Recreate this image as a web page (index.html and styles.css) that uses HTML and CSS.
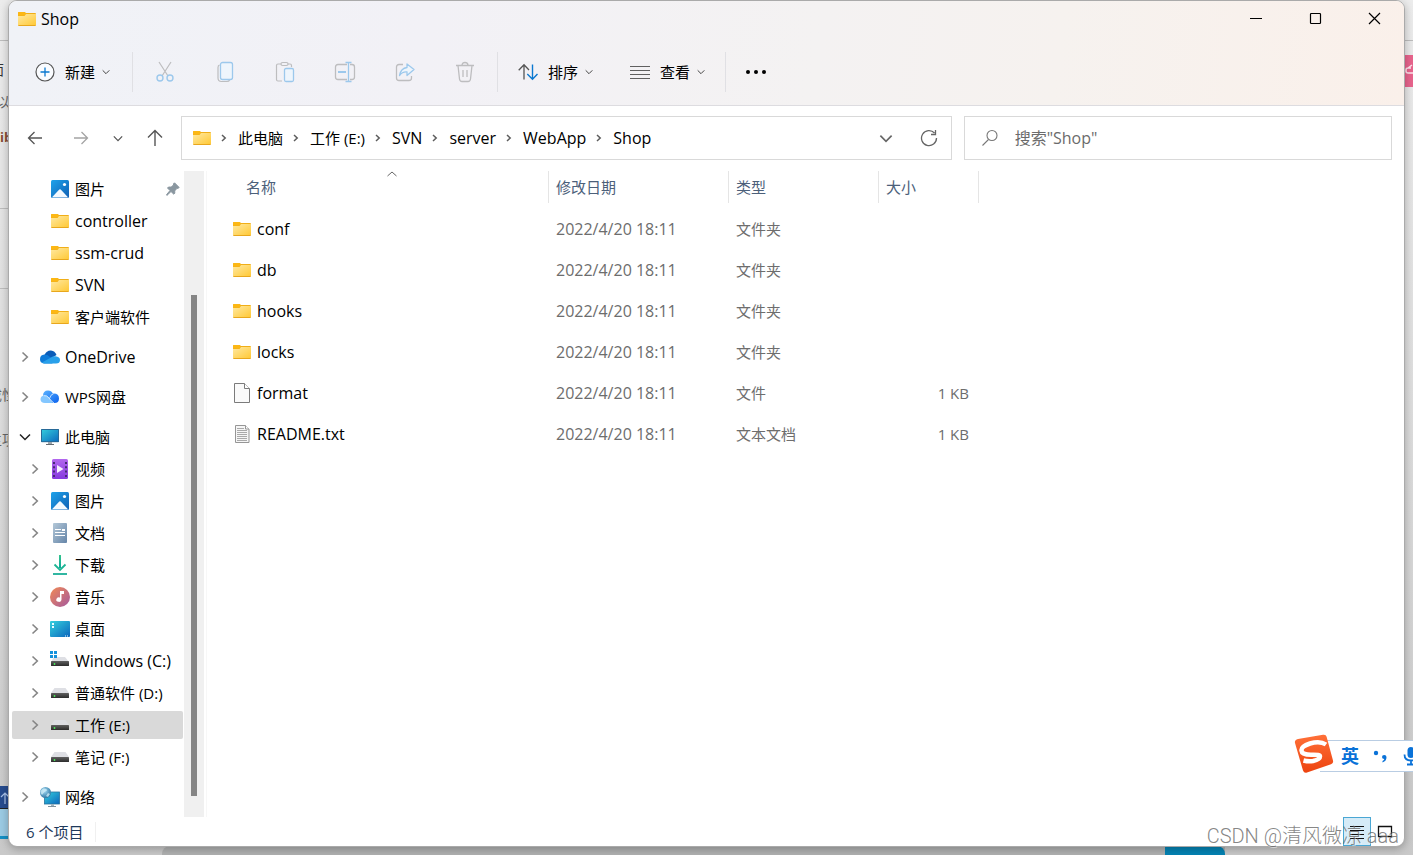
FILE: index.html
```html
<!DOCTYPE html>
<html lang="zh-CN">
<head>
<meta charset="utf-8">
<title>Shop</title>
<link rel="stylesheet" href="styles.css">
</head>
<body>
<svg class="sprite" aria-hidden="true">
  <defs>
    <linearGradient id="gFolder" x1="0" y1="0" x2="1" y2="1"><stop offset="0" stop-color="#ffe9a2"/><stop offset="1" stop-color="#ffc937"/></linearGradient>
    <linearGradient id="gPic" x1="0" y1="0" x2="1" y2="1"><stop offset="0" stop-color="#1fa3ea"/><stop offset="1" stop-color="#0f5fb4"/></linearGradient>
    <linearGradient id="gScreen" x1="0" y1="0" x2="1" y2="1"><stop offset="0" stop-color="#35d0dd"/><stop offset="1" stop-color="#0b66bd"/></linearGradient>
    <linearGradient id="gVideo" x1="0" y1="0" x2="0" y2="1"><stop offset="0" stop-color="#b267ee"/><stop offset="1" stop-color="#8639de"/></linearGradient>
    <linearGradient id="gDoc" x1="0" y1="0" x2="1" y2="1"><stop offset="0" stop-color="#b4c8d8"/><stop offset="1" stop-color="#6585a8"/></linearGradient>
    <linearGradient id="gDown" x1="0" y1="0" x2="0" y2="1"><stop offset="0" stop-color="#35c48d"/><stop offset="1" stop-color="#0ba79b"/></linearGradient>
    <linearGradient id="gMusic" x1="0" y1="0" x2="1" y2="1"><stop offset="0" stop-color="#f28a54"/><stop offset="1" stop-color="#a4599f"/></linearGradient>
    <linearGradient id="gDrive" x1="0" y1="0" x2="0" y2="1"><stop offset="0" stop-color="#606060"/><stop offset="1" stop-color="#2c2c2c"/></linearGradient>
    <linearGradient id="gWps" x1="0" y1="0" x2="1" y2="1"><stop offset="0" stop-color="#5ab2ff"/><stop offset="1" stop-color="#0b62ee"/></linearGradient>
    <radialGradient id="gGlobe" cx=".4" cy=".35" r=".7"><stop offset="0" stop-color="#a5dcf4"/><stop offset="1" stop-color="#28719f"/></radialGradient>
    <linearGradient id="gSogou" x1="0" y1="0" x2="0" y2="1"><stop offset="0" stop-color="#ff7038"/><stop offset="1" stop-color="#ed430f"/></linearGradient>
  </defs>
  <symbol id="folder" viewBox="0 0 18 14"><path d="M0 1Q0 0 1 0h5.500l1.500 1H17q1 0 1 1v5H0z" fill="#f0ae18"/><path d="M0 1Q0 0 1 0h5.500l1 1v1.500L6 3.500H0z" fill="#fcb714"/><path d="M0 4h6.500L8 2h10v11H0z" fill="url(#gFolder)"/><path d="M0 13h18q0 1-1 1H1q-1 0-1-1z" fill="#e8a71d"/></symbol>
  <symbol id="picture" viewBox="0 0 18 18"><rect width="18" height="18" rx="1.500" fill="url(#gPic)"/><path d="M1 17.300 8.300 9.600q.7-.7 1.400 0L17 17.300q-.4.3-1 .3H2q-.6 0-1-.3z" fill="#f3f9ff"/><circle cx="13.500" cy="4.500" r="1.600" fill="#fff"/></symbol>
  <symbol id="chev" viewBox="0 0 8 12"><path d="M1.500 1.500 6.300 6l-4.800 4.500" fill="none" stroke="currentColor" stroke-width="1.600"/></symbol>
  <symbol id="crumb" viewBox="0 0 6 8"><path d="m1 1 3.200 3L1 7" fill="none" stroke="#5c5c5c" stroke-width="1.500"/></symbol>
  <symbol id="down" viewBox="0 0 12 8"><path d="m1 1.500 5 5 5-5" fill="none" stroke="currentColor" stroke-width="1.500"/></symbol>
  <symbol id="drive" viewBox="0 0 18 12"><path d="M3.500 1h11L18 6H0z" fill="#dedfe4"/><rect y="6" width="18" height="5" rx=".6" fill="url(#gDrive)"/><circle cx="3.500" cy="9" r=".9" fill="#4aef5a"/></symbol>
</svg>

<div class="backdrop" aria-hidden="true">
  <span class="frag frag-a">面</span><span class="frag frag-b">以</span><span class="frag frag-c"><b>ib</b></span>
  <span class="frag frag-d">成性</span><span class="frag frag-e">主项</span>
  <span class="edge edge-a"></span><span class="edge edge-b"></span><span class="edge edge-c"></span>
  <span class="block block-pink"><svg width="12" height="14" viewBox="0 0 12 14"><path d="M8 2 4 5M7 5H4q-2 0-2 2v1q0 2 2 2h6" fill="none" stroke="#ffe3ec" stroke-width="1.500"/></svg></span>
  <span class="block block-navy"><svg width="10" height="14" viewBox="0 0 10 14"><path d="M5 13V2M1 6l4-4 4 4" fill="none" stroke="#a9c1e8" stroke-width="1.200"/></svg></span>
  <span class="block block-sky"></span><span class="block block-grey"></span><span class="block block-teal"></span>
</div>

<main class="window">
  <header class="chrome">
    <div class="titlebar">
      <svg class="i-folder"><use href="#folder"/></svg>
      <h1 class="title">Shop</h1>
      <div class="controls">
        <button aria-label="最小化"><svg width="13" height="13"><path d="M0 6.500h12" stroke="#000"/></svg></button>
        <button aria-label="最大化"><svg width="13" height="13"><rect x="1.500" y="1.500" width="10" height="10" rx=".8" fill="none" stroke="#000" stroke-width="1.200"/></svg></button>
        <button aria-label="关闭"><svg width="13" height="13"><path d="m1 1 11 11M12 1 1 12" stroke="#000" stroke-width="1.200"/></svg></button>
      </div>
    </div>
    <div class="toolbar" role="toolbar" aria-label="命令">
      <button class="cmd"><svg width="20" height="20"><circle cx="10" cy="10" r="9" fill="#fafcff" stroke="#555" stroke-width="1.200"/><path d="M10 5.500v9M5.500 10h9" stroke="#0a78d0" stroke-width="1.300"/></svg>新建<svg class="i-caret"><use href="#down"/></svg></button>
      <i class="sep"></i>
      <button class="tool" aria-label="剪切" disabled><svg width="20" height="22"><path d="m4 1 9 14M16 1 7 15" stroke="#bdbdbf" stroke-width="1.200"/><circle cx="5" cy="17" r="3" fill="none" stroke="#9cc8ec" stroke-width="1.400"/><circle cx="15" cy="17" r="3" fill="none" stroke="#9cc8ec" stroke-width="1.400"/></svg></button>
      <button class="tool" aria-label="复制" disabled><svg width="20" height="22"><path d="M4.500 4Q3 4.500 3 6.500V17q0 3.500 3.500 3.500H12q2 0 2.600-1.500" fill="none" stroke="#bdbdbf" stroke-width="1.200"/><rect x="5.500" y="1.500" width="12" height="17" rx="2" fill="#eef5fc" stroke="#9cc8ec" stroke-width="1.300"/></svg></button>
      <button class="tool" aria-label="粘贴" disabled><svg width="20" height="22"><path d="M6 3H3Q1.500 3 1.500 4.500v14Q1.500 20 3 20h4M13 3h2q1.500 0 1.500 1.500V6" fill="none" stroke="#bdbdbf" stroke-width="1.200"/><rect x="6" y="1.500" width="7" height="3" rx="1.500" fill="none" stroke="#bdbdbf" stroke-width="1.200"/><rect x="9.500" y="7.500" width="9" height="13" rx="1.500" fill="#eef5fc" stroke="#9cc8ec" stroke-width="1.300"/></svg></button>
      <button class="tool" aria-label="重命名" disabled><svg width="22" height="22"><path d="M13 3.500H4Q1.500 3.500 1.500 6v10q0 2.500 2.500 2.500h9M16 3.500h2q2.500 0 2.500 2.500v10q0 2.500-2.500 2.500h-2" fill="none" stroke="#bdbdbf" stroke-width="1.300"/><path d="M4 11h8" stroke="#9cc8ec" stroke-width="2"/><path d="M14.500 1.500v19M11.500 1.500h6M11.500 20.500h6" stroke="#9cc8ec" stroke-width="1.300"/></svg></button>
      <button class="tool" aria-label="共享" disabled><svg width="20" height="22"><path d="M8 3.500H4Q1.500 3.500 1.500 6v11q0 2.500 2.500 2.500h10q2.500 0 2.500-2.500v-2" fill="none" stroke="#bdbdbf" stroke-width="1.300"/><path d="M12 3v3.500q-6 .5-7.500 8Q7.500 10.500 12 11v3.500L19 8.500z" fill="#eef5fc" stroke="#9cc8ec" stroke-width="1.300" stroke-linejoin="round"/></svg></button>
      <button class="tool" aria-label="删除" disabled><svg width="20" height="22"><path d="M1 4.500h18M3 4.500 4.500 18q.3 2.500 2.500 2.500h6q2.200 0 2.500-2.500L17 4.500M7 4.500q0-3 3-3t3 3M8 9v7M12 9v7" fill="none" stroke="#bdbdbf" stroke-width="1.300"/></svg></button>
      <i class="sep"></i>
      <button class="cmd cmd-sort"><svg width="20" height="18"><path d="M6 16.500V2M.7 7.200 6 1.800l5 5.200" fill="none" stroke="#555" stroke-width="1.300"/><path d="M14.500 1.500V16M9.300 11l5.200 5.200 5-5.200" fill="none" stroke="#0a78d0" stroke-width="1.400"/></svg>排序<svg class="i-caret"><use href="#down"/></svg></button>
      <button class="cmd cmd-view"><svg width="20" height="14"><path d="M0 1.500h20M0 5.500h20M0 9.500h20M0 13.500h20" stroke="#606060" stroke-width="1"/></svg>查看<svg class="i-caret"><use href="#down"/></svg></button>
      <i class="sep"></i>
      <button class="tool tool-more" aria-label="更多"><svg width="22" height="6"><circle cx="3" cy="3" r="2"/><circle cx="11" cy="3" r="2"/><circle cx="19" cy="3" r="2"/></svg></button>
    </div>
  </header>

  <div class="navbar">
    <button class="nav" aria-label="后退"><svg width="16" height="14"><path d="M15 7H1.500M7.500 1l-6 6 6 6" fill="none" stroke="#555" stroke-width="1.300"/></svg></button>
    <button class="nav" aria-label="前进"><svg width="16" height="14"><path d="M1 7h13.500M8.500 1l6 6-6 6" fill="none" stroke="#a4a4a4" stroke-width="1.300"/></svg></button>
    <button class="nav nav-small" aria-label="最近位置"><svg width="10" height="7" color="#555"><use href="#down"/></svg></button>
    <button class="nav" aria-label="向上"><svg width="16" height="18"><path d="M8 17V2M1 8.500l7-7 7 7" fill="none" stroke="#555" stroke-width="1.400"/></svg></button>
    <nav class="address" aria-label="地址">
      <svg class="i-folder"><use href="#folder"/></svg>
      <svg class="i-crumb"><use href="#crumb"/></svg><button class="zh">此电脑</button>
      <svg class="i-crumb"><use href="#crumb"/></svg><button class="zh">工作 (E:)</button>
      <svg class="i-crumb"><use href="#crumb"/></svg><button>SVN</button>
      <svg class="i-crumb"><use href="#crumb"/></svg><button>server</button>
      <svg class="i-crumb"><use href="#crumb"/></svg><button>WebApp</button>
      <svg class="i-crumb"><use href="#crumb"/></svg><button>Shop</button>
      <div class="address-end">
        <button aria-label="历史记录"><svg width="14" height="9" color="#666"><use href="#down"/></svg></button>
        <button aria-label="刷新"><svg width="18" height="18"><path d="M14.500 4A7.500 7.500 0 1 0 16.500 9M15.500 1v4.500H11" fill="none" stroke="#666" stroke-width="1.300"/></svg></button>
      </div>
    </nav>
    <label class="search">
      <svg width="18" height="18"><circle cx="11" cy="6.500" r="5" fill="none" stroke="#777" stroke-width="1.100"/><path d="M7.500 10.500 1.500 16.500" stroke="#777" stroke-width="1.100"/></svg>
      <input type="search" placeholder='搜索"Shop"' aria-label="搜索">
    </label>
  </div>

  <div class="body">
    <nav class="tree" aria-label="导航窗格">
      <ul>
        <li class="sub"><i></i><svg width="18" height="18"><use href="#picture"/></svg>图片
          <svg class="pin" width="14" height="14"><path d="m8.500.8 4.700 4.700-1.200.8-1 0-2.300 2.600.1 2.300-1 1L5 9.500.9 13.400l-.5-.5L4 8.500 1.500 6l1-1 2.600.1L7.500 3V1.800z" fill="#8a97a0" stroke="#8a97a0"/></svg></li>
        <li class="sub en"><i></i><svg class="i-folder"><use href="#folder"/></svg>controller</li>
        <li class="sub en"><i></i><svg class="i-folder"><use href="#folder"/></svg>ssm-crud</li>
        <li class="sub en"><i></i><svg class="i-folder"><use href="#folder"/></svg>SVN</li>
        <li class="sub"><i></i><svg class="i-folder"><use href="#folder"/></svg>客户端软件</li>
      </ul>
      <ul><li class="en"><svg class="i-chev"><use href="#chev"/></svg><svg width="20" height="14"><path d="M4.500 5Q6.500.3 11 .5q4 .3 5.500 4.500L10 9z" fill="#0a5cb8"/><path d="M4 13.500Q0 13 0 9.200 0 5 4.500 4.600q3 0 5.500 2.400l6 4-4 2.500z" fill="#0f7bd8"/><path d="M2 12.500 11 7.500q2-1.500 4.500-1.200Q20 6.700 20 10q0 3.500-4 3.500H4.500Q3 13.500 2 12.500z" fill="#28a0ea"/></svg>OneDrive</li></ul>
      <ul><li><svg class="i-chev"><use href="#chev"/></svg><svg width="20" height="14"><path d="M3 6Q3 .5 8 .5q3.500 0 4.800 3Q19 3 19 8.500q0 4.500-4.500 4.500H9L5 6z" fill="url(#gWps)"/><path d="M5 13Q.5 13 .5 9.300T5 5.500q2.500 0 4 2.200T13 13z" fill="#84c7ff"/><path d="M3.500 5.600Q7 5 9 8t5 5M9.500 8.500q1-4 4-4.800" fill="none" stroke="#eaf5ff" stroke-width=".8"/></svg>WPS网盘</li></ul>
      <ul>
        <li><svg class="open" width="12" height="8"><use href="#down"/></svg><svg width="18" height="16"><rect width="18" height="13" rx=".6" fill="url(#gScreen)"/><path d="M.5 12.700V.5h17v12.200z" fill="none" stroke="#286997"/><path d="M7 13h4v2H7z" fill="#9aa3ab"/><path d="M5 15.500h8" stroke="#646b72"/></svg>此电脑</li>
        <li class="sub"><svg class="i-chev"><use href="#chev"/></svg><svg width="16" height="20"><rect width="16" height="20" rx="1.500" fill="url(#gVideo)"/><path d="M2 3v15M14 3v15" stroke="#472a75" stroke-width="2" stroke-dasharray="2 2.300"/><path d="M5 6v8l6.500-4z" fill="#f6efff"/></svg>视频</li>
        <li class="sub"><svg class="i-chev"><use href="#chev"/></svg><svg width="18" height="18"><use href="#picture"/></svg>图片</li>
        <li class="sub"><svg class="i-chev"><use href="#chev"/></svg><svg width="14" height="20"><rect width="14" height="20" rx="1" fill="url(#gDoc)"/><path d="M2 6.500h6M2 9.500h10M2 12.500h10" stroke="#fff"/><path d="M9 6h3v2H9z" fill="#fff"/></svg>文档</li>
        <li class="sub"><svg class="i-chev"><use href="#chev"/></svg><svg width="14" height="20"><path d="M6 0h2v13H6z" fill="url(#gDown)"/><path d="m1.500 9.500 5.500 5.500 5.500-5.500" fill="none" stroke="#1db594" stroke-width="1.800"/><path d="M0 19h14" stroke="#1aae98" stroke-width="1.800"/></svg>下载</li>
        <li class="sub"><svg class="i-chev"><use href="#chev"/></svg><svg width="20" height="20"><circle cx="10" cy="10" r="10" fill="url(#gMusic)"/><path d="M10 4h4v3h-2.500v5.500a2.600 2.300 0 1 1-1.500-2z" fill="#fff"/></svg>音乐</li>
        <li class="sub"><svg class="i-chev"><use href="#chev"/></svg><svg width="20" height="16"><rect width="20" height="16" rx="1" fill="url(#gScreen)"/><path d="M2 2h2v2H2zM2 5h2v2H2zM15 14.500h1v1h-1zm2 0h1v1h-1z" fill="#e9fbff"/></svg>桌面</li>
        <li class="sub en"><svg class="i-chev"><use href="#chev"/></svg><svg width="20" height="20"><path d="M4 6h11l4 5H1z" fill="#dedfe4"/><rect x="1" y="10" width="18" height="5" rx=".6" fill="url(#gDrive)"/><circle cx="4.500" cy="13" r=".9" fill="#4aef5a"/><path d="M0 0h3v3H0zM4 0h3v3H4zM0 4h3v3H0zM4 4h3v3H4z" fill="#1592dc"/></svg>Windows (C:)</li>
        <li class="sub"><svg class="i-chev"><use href="#chev"/></svg><svg width="18" height="12"><use href="#drive"/></svg>普通软件 (D:)</li>
        <li class="sub selected" aria-current="true"><svg class="i-chev"><use href="#chev"/></svg><svg width="18" height="12"><use href="#drive"/></svg>工作 (E:)</li>
        <li class="sub"><svg class="i-chev"><use href="#chev"/></svg><svg width="18" height="12"><use href="#drive"/></svg>笔记 (F:)</li>
      </ul>
      <ul><li><svg class="i-chev"><use href="#chev"/></svg><svg width="20" height="20"><rect x="4.500" y="5" width="15" height="12" fill="url(#gScreen)" stroke="#27749f" stroke-width=".8"/><path d="M11 17h3v2h-3z" fill="#9db2bd"/><path d="M8 19.500h8" stroke="#7f929d"/><circle cx="5.500" cy="5.500" r="5.500" fill="url(#gGlobe)"/><path d="M3 1.500q4-.5 4 2L4.500 5 2 8Q0 6 .5 4zM8 6l2 1-2 3-2-1z" fill="#d3eff8" opacity=".75"/></svg>网络</li></ul>
    </nav>
    <div class="scroll"><div class="thumb"></div></div>
    <section class="files">
      <table>
        <colgroup><col class="c-name"><col class="c-date"><col class="c-type"><col class="c-size"></colgroup>
        <thead><tr><th>名称<svg class="sort" width="10" height="6"><path d="m.5 5 4.500-4 4.500 4" fill="none" stroke="#666"/></svg></th><th>修改日期</th><th>类型</th><th>大小</th></tr></thead>
        <tbody>
          <tr><td><span><svg class="i-folder"><use href="#folder"/></svg>conf</span></td><td>2022/4/20 18:11</td><td>文件夹</td><td></td></tr>
          <tr><td><span><svg class="i-folder"><use href="#folder"/></svg>db</span></td><td>2022/4/20 18:11</td><td>文件夹</td><td></td></tr>
          <tr><td><span><svg class="i-folder"><use href="#folder"/></svg>hooks</span></td><td>2022/4/20 18:11</td><td>文件夹</td><td></td></tr>
          <tr><td><span><svg class="i-folder"><use href="#folder"/></svg>locks</span></td><td>2022/4/20 18:11</td><td>文件夹</td><td></td></tr>
          <tr><td><span><svg width="18" height="22"><path d="M1.500 1.500h10l5 5v14h-15z" fill="#fafafa" stroke="#7b7b7b"/><path d="M11.500 1.500v5h5" fill="#fff" stroke="#7b7b7b"/></svg>format</span></td><td>2022/4/20 18:11</td><td>文件</td><td>1 KB</td></tr>
          <tr><td><span><svg width="18" height="20"><path d="M2.500 1.500h10l3.500 3.500v13.500H2.500z" fill="#f6f6f6" stroke="#969696"/><path d="M12.500 1.500V5H16" fill="#fff" stroke="#969696"/><path d="M4 4.500h7M4 6.500h10M4 8.500h10M4 10.500h10M4 12.500h10M4 14.500h10M4 16.500h10" stroke="#aaa"/></svg>README.txt</span></td><td>2022/4/20 18:11</td><td>文本文档</td><td>1 KB</td></tr>
        </tbody>
      </table>
    </section>
  </div>

  <footer class="status">
    <span class="count">6 个项目</span>
    <button class="view active" aria-label="详细信息"><svg width="14" height="14"><path d="M0 1.500h14M0 5.500h14M0 9.500h14M0 13.500h14" stroke="#111"/></svg></button>
    <button class="view" aria-label="大图标"><svg width="16" height="14"><path d="M1.500 1.500h13v10h-13z" fill="none" stroke="#111" stroke-width="1.300"/></svg></button>
  </footer>
</main>

<aside class="ime">
  <svg class="ime-logo" width="40" height="40"><path d="M4 5 29 .8q3-.5 3.600 2L39 26.500q.7 2.600-2 3.700L13 38.500q-3 .8-4-2L1 9q-.7-3 3-4z" fill="url(#gSogou)"/><path d="M32 10.500Q26 6.500 16 9.500q-9 3-8.500 7 .3 4.500 11 4.200 7.500-.2 7.500 1.800 0 3-7 4.500-4.500.8-9.500-.5" fill="none" stroke="#fff" stroke-width="4.500"/></svg>
  <button class="ime-lang">英</button>
  <button aria-label="标点"><svg width="16" height="16"><circle cx="3" cy="5" r="2.200" fill="#0a72d8"/><path d="M9 9q0-2 2.200-2T13.500 9q.2 4-4 5.500V13q1.800-.8 1.800-2Q9 11 9 9z" fill="#0a72d8"/></svg></button>
  <button aria-label="语音"><svg width="16" height="20"><rect x="4.500" y="1" width="7" height="11" rx="3.500" fill="#0a72d8"/><path d="M1.500 8.500q0 6 6.500 6t6.500-6M8 14.500V18M4 18.500h8" fill="none" stroke="#0a72d8" stroke-width="1.800"/></svg></button>
</aside>
<p class="watermark">CSDN @清风微凉 aaa</p>
</body>
</html>
```
FILE: styles.css
```css
* { box-sizing: border-box; }
body {
  margin: 0;
  height: 100vh;
  padding: 0 8px 8px;
  overflow: hidden;
  position: relative;
  background: linear-gradient(#ececec, #dedede 45%, #c9c9c9);
  font: 16px/20px "Open Sans", "Noto Sans CJK SC", sans-serif;
  color: #000;
}
button {
  border: 0;
  padding: 0;
  background: none;
  font: inherit;
  color: inherit;
  display: flex;
  align-items: center;
  justify-content: center;
}
svg { display: block; flex: none; }
.sprite { position: absolute; width: 0; height: 0; }
.i-folder { width: 18px; height: 14px; }
.i-caret { width: 8px; height: 6px; color: #444; }
.i-crumb { width: 6px; height: 8px; margin: 0 11px 0 10px; }
.i-chev { width: 8px; height: 12px; color: #858585; }

/* Desktop content that shows round the window */
.backdrop { position: absolute; inset: 0; overflow: hidden; color: #666; font-size: 14px; }
.frag, .edge, .block { position: absolute; white-space: nowrap; }
.frag { right: calc(100% - 10px); }
.frag-a { top: 60px; right: calc(100% - 4px); color: #333; }
.frag-b { top: 92px; }
.frag-c { top: 127px; left: 0; right: auto; font-size: 13px; color: #874c32; }
.frag-d { top: 385px; right: calc(100% - 16px); }
.frag-e { top: 430px; right: calc(100% - 16px); }
.edge { left: 0; right: 0; height: 1px; background: #bdbdbd; }
.edge-a { top: 40px; }
.edge-b { top: 208px; width: 9px; }
.edge-c { top: 288px; width: 9px; }
.block-pink { right: 0; top: 55px; width: 9px; height: 32px; padding: 8px 0; background: #e8648d; overflow: hidden; }
.block-navy { left: 0; top: 786px; width: 12px; height: 23px; padding: 5px 0; background: #264b8e; border-bottom: 1px solid #222; }
.block-sky { left: 0; top: 809px; width: 12px; height: 30px; background: #9ccbe4; border-bottom: 3px solid #1590c4; }
.block-grey { left: 162px; right: 188px; bottom: 0; height: 9px; background: #b0b1b1; border-radius: 8px 0 0; }
.block-teal { right: 188px; bottom: 0; width: 60px; height: 9px; background: #0483b3; border-radius: 0 8px 0 0; }

.window {
  position: relative;
  height: 100%;
  display: flex;
  flex-direction: column;
  background: #fff;
  border: 1px solid #aaa;
  border-radius: 9px;
  overflow: hidden;
  box-shadow: 0 2px 8px #0004;
}
.chrome {
  height: 105px;
  border-bottom: 1px solid #dddce0;
  background: linear-gradient(97deg, #f0f2f7, #f2f1f6 30%, #f4f2f2 58%, #f6f2ef 75%, #faf0ea);
}
.titlebar { display: flex; align-items: center; height: 37px; padding: 0 0 2px 9px; gap: 5px; }
.title { margin: 0; font: inherit; }
.controls { display: flex; margin-left: auto; }
.controls button { width: 59px; height: 35px; }
.toolbar { display: flex; align-items: center; height: 68px; padding-left: 16px; }
.cmd { height: 40px; padding: 0 10px; gap: 10px; font-size: 15px; }
.cmd .i-caret { margin-left: -3px; }
.cmd-sort { margin-left: 8px; }
.cmd-view { margin-left: 17px; }
.tool { width: 60px; height: 40px; }
.tool-more { width: 56px; }
.sep { width: 1px; height: 40px; margin: 0 2px; background: #e0e0e4; }
.cmd + .sep { margin-left: 12px; }
.cmd-view + .sep { margin-left: 10px; }

.navbar { display: flex; align-items: center; padding: 10px 12px 11px 3px; }
.nav { width: 46px; height: 40px; }
.nav-small { width: 28px; }
.address, .search { height: 44px; border: 1px solid #d9d9d9; display: flex; align-items: center; min-width: 0; }
.address { flex: 757 1 0; margin-left: 3px; padding-left: 11px; white-space: nowrap; }
.zh { font-size: 15px; }
.address-end { display: flex; margin-left: auto; }
.address-end button { width: 43px; height: 42px; }
.search { flex: 394 1 0; margin-left: 12px; padding: 0 16px; gap: 16px; }
.search input { flex: 1; min-width: 0; border: 0; padding: 0; outline: 0; background: none; font: inherit; }
.search input::placeholder { color: #6b6b6b; opacity: 1; }

.body { flex: 1; display: flex; min-height: 0; }
.tree { width: 175px; padding: 4px 1px 0 3px; display: flex; flex-direction: column; gap: 12px; font-size: 15px; white-space: nowrap; }
.tree ul { list-style: none; margin: 0; padding: 0; display: flex; flex-direction: column; gap: 4px; }
.tree li { height: 28px; display: grid; grid-template-columns: 20px 20px 1fr auto; column-gap: 5px; align-items: center; padding-left: 3px; border-radius: 2px; }
.tree li > svg { justify-self: center; }
.tree .sub { padding-left: 13px; }
.tree .en { font-size: 16px; }
.tree .selected { background: #d9d9d9; }
.open { color: #222; }
.pin { margin-right: 3px; }
.scroll { width: 20px; padding: 124px 7px 21px; background: #f0f0f0; display: flex; }
.thumb { flex: 1; background: #858585; }

.files { flex: 1; margin-left: 2px; padding-left: 26px; border-left: 1px solid #f7f7f7; }
table { border-collapse: separate; border-spacing: 0; table-layout: fixed; width: 746px; }
.c-name { width: 315px; }
.c-date { width: 180px; }
.c-type { width: 150px; }
.c-size { width: 101px; }
th { position: relative; height: 32px; padding: 0 0 0 7px; text-align: left; font-weight: 400; font-size: 15px; color: #4c607a; border-left: 1px solid #e5e5e5; }
th:first-child { border-left: 0; padding-left: 13px; }
th:last-child { border-right: 1px solid #e5e5e5; }
.sort { position: absolute; top: 0; left: 49%; }
tbody::before { content: ""; display: block; height: 5px; }
td { height: 41px; padding: 0 0 0 8px; color: #6d6d6d; }
td:first-child { padding: 0; color: #000; }
td:nth-child(3) { font-size: 15px; }
td:last-child { text-align: right; padding-right: 10px; font-size: 15px; }
td span { display: flex; align-items: center; gap: 6px; }

.status { height: 29px; display: flex; align-items: center; padding: 0 5px 0 17px; font-size: 15px; color: #1e395b; }
.count { margin-right: auto; padding-right: 12px; border-right: 1px solid #f0f0f0; }
.view { width: 28px; height: 29px; border: 1px solid transparent; }
.view.active { background: #d5ebf7; border-color: #4aa7d4; }

.ime { position: absolute; right: 0; bottom: 83px; width: 93px; height: 32px; display: flex; align-items: center; background: #fff; border: solid #b9cde3; border-width: 1px 0; }
.ime-logo { margin: 0 7px 4px -26px; }
.ime-lang { font-weight: 700; font-size: 18px; color: #0a72d8; margin-right: 14px; }
.ime button { flex: none; }
.ime button:last-child { margin-left: 14px; }
.watermark { position: absolute; right: 14px; bottom: 6px; margin: 0; font: 300 20px/26px Roboto, "Noto Sans CJK SC", sans-serif; color: #666c; text-shadow: 1px 1px #fff8; }
```
